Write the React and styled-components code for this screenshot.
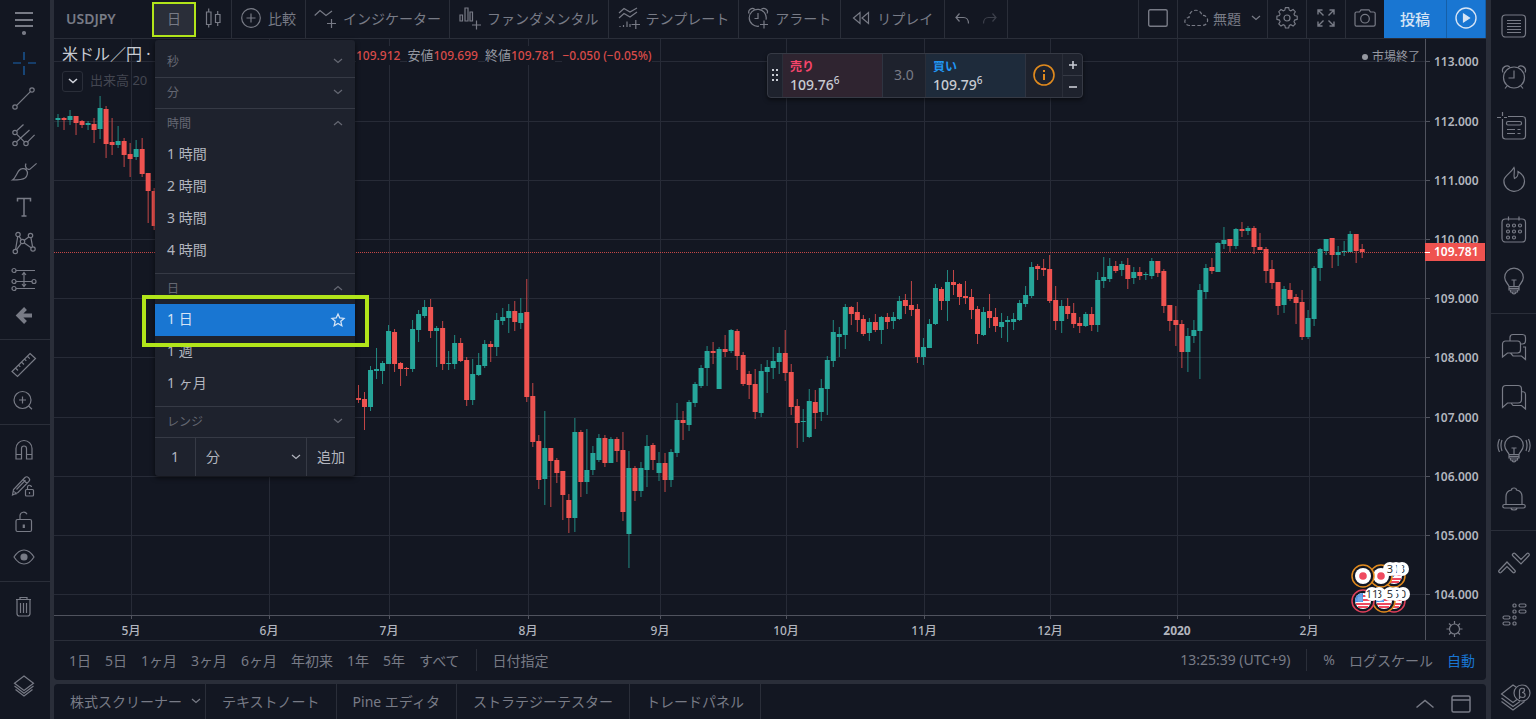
import React from 'react';
import styled, { createGlobalStyle, css } from 'styled-components';

const GlobalStyle = createGlobalStyle`
    * {
        box-sizing: border-box;
    }

    body {
        margin: 0;
        background-color: #2a2e39;
        color: #787b86;
        font-family: "Noto Sans", "Noto Sans CJK JP", sans-serif;
        font-size: 14px;
    }

    button, input, select {
        font: inherit;
        color: inherit;
        background: none;
        border: 0;
        padding: 0;
        margin: 0;
    }
`;

/* ---------- icons ---------- */

const ICONS = {
    menu: [28, 28, <><path d="M5 7h18M5 14h18M5 20h18" strokeWidth="2" /><circle cx="14" cy="27" r="1.5" fill="currentColor" /></>],
    cross: [28, 28, <path d="M3 14h8M18 14h8M14 3v8M14 17v9" />],
    line: [28, 28, <><circle cx="5" cy="22" r="2.2" /><circle cx="22" cy="5" r="2.2" /><path d="M6.7 20.4L20.4 6.7" /></>],
    fork: [28, 28, <><circle cx="5" cy="11.5" r="2.2" /><circle cx="5" cy="22.5" r="2.2" /><circle cx="16" cy="22.5" r="2.2" /><path d="M6.7 9.8l6.8-6.3M6.6 20.8L19.5 9M17.6 20.9l7-7M6.6 13.1l7.8 7.8" /></>],
    brush: [28, 28, <path d="M2.500 23c3-2 4-6.500 6.500-9.500 2-2.300 5.500-2.300 7.300-.5 2 2.200 1.200 6-1.300 8-2.500 1.800-6 2-12.500 2zM16 6.500c-.8 1.500-.6 3.500.6 4.800 1.200 1.200 3 1.400 4 .3l6-5.200M15.500 12.500l1.500-1.500" />],
    text: [28, 28, <path d="M7.500 8.500v-3h13v3M14 5.500v17.500M11.500 23h5" strokeWidth="1.500" />],
    pattern: [28, 28, <><circle cx="8" cy="5.500" r="2.200" /><circle cx="20.500" cy="6.500" r="2.200" /><circle cx="12.500" cy="12.500" r="2.200" /><circle cx="5.300" cy="22.500" r="2.200" /><circle cx="23" cy="20" r="2.200" /><path d="M5.600 20.300L7.700 7.700M9.200 7.400l2.100 3.200M14.300 11.200L18.700 7.900M20.900 8.700l1.700 9.100M6.600 20.700l4.700-6.400M14.300 13.900l6.800 4.900" /></>],
    forecast: [28, 28, <><circle cx="4" cy="5.500" r="2" /><circle cx="4" cy="16.500" r="2" /><circle cx="24" cy="16.500" r="2" /><circle cx="4" cy="23.500" r="2" /><path d="M6 5.500h19M6 16.500h16M6 23.500h19M14 8v13M12 10l2-2.500 2 2.500M12 19l2 2.500 2-2.500" /></>],
    back: [28, 28, <path d="M15.500 7.500L8.500 14.500l7 7M9 14.500h13" strokeWidth="4" />],
    ruler: [28, 28, <path d="M20 3.500l5.500 5-18 18L2 21.500zM5.500 18l2.500 2.500M8.500 15l1.800 1.800M11.500 12l2.500 2.500M14.500 9l1.800 1.800M17.300 6.200l2.500 2.500" />],
    zoom: [28, 28, <><circle cx="12.500" cy="14" r="8.500" /><path d="M9 14h7M12.500 10.500v7M18.600 20l3.400 3.300" /></>],
    magnet: [28, 28, <path d="M6 24V13.500a8 8 0 0 1 16 0V24h-5.500V13.500a2.500 2.500 0 0 0-5 0V24zM6 19.500h5.500M16.500 19.500H22" />],
    pencilLock: [28, 28, <><path d="M2.500 24l1-5.500L15 6.500c1-1 2.500-1 3.300 0l.6.600c.9.900.9 2.300 0 3.200L8 21.500zM13 8.500l4 4M6.500 18.500l9-9.300M3 20.500c1.500 0 3 1.500 3 3" /><rect x="15.500" y="18.500" width="8" height="6.500" rx="1" fill="#131722" /><path d="M17.500 18.500v-2a2 2 0 0 1 4-.5M19.500 21v2" /></>],
    lock: [28, 28, <><rect x="6" y="12.500" width="15.500" height="12" rx="1.500" /><path d="M10 12.500V8.500a3.700 3.700 0 0 1 7-1.200" /><path d="M13.800 17.500v3.500" strokeWidth="2.200" /></>],
    eye: [28, 28, <><path d="M4 14c3-4.700 6.500-7 10-7s7 2.300 10 7c-3 4.700-6.500 7-10 7s-7-2.300-10-7z" /><circle cx="14" cy="14" r="3" fill="currentColor" /></>],
    trash: [28, 28, <path d="M6 7.500h15M10 7V5.500h7V7M7 8v13.500a2.500 2.500 0 0 0 2.500 2.500h8a2.500 2.500 0 0 0 2.500-2.500V8M10.500 11v10M13.500 11v10M16.500 11v10" />],
    layers: [28, 28, <path d="M14 4l9.500 7.200L14 18.500l-9.500-7.300zM4.500 14l9.500 7.300 9.500-7.300M5.500 17.500L14 24l8.500-6.500" />],

    candles: [17, 22, <path d="M1.500 5H6v12.500H1.500zM3.700 1.500V5M3.700 17.500v3M10.500 7.500H15v8h-4.500zM12.700 4v3.500M12.700 15.500v3.500" />],
    compare: [20, 20, <><circle cx="10" cy="10" r="9.300" /><path d="M5.500 10h9M10 5.500v9" /></>],
    indicators: [22, 22, <path d="M.7 8.500L6 3.500l6 5 6-4.500M13 16.500h9M17.500 12v9" />],
    bars: [22, 22, <path d="M1 8h2.500v6H1zM6 1h3v13H6zM11 5h2.500v9H11zM13 18h9M17.500 13.500v9" />],
    template: [22, 22, <path d="M1 6l5-4.500 6 3.500 7-4M1 11l5-4.500 6 3.500 7-5M2 19v1M5.500 18v2M9 14.500V20M12 17v3M13.500 17.500H22M17.800 13v9" />],
    alert: [20, 22, <path d="M11 19.200a8.500 8.500 0 1 1 7-6.500M10 6v5.500H6.500M1 6.500C-.5 3 4 0 6.500 2M13.500 2c3-2 7.500 1 5.500 4.500M12 17.500h8M16 13.500v8" />],
    replay: [18, 14, <path d="M8 1.500v11L1.500 7zM16.500 1.500v11L10 7z" />],
    undo: [16, 14, <path d="M5.500 1.500L2 5.500l3.500 4M2 5.500h7.500c3 0 5 2.500 5 6" />],
    redo: [16, 14, <path d="M10.500 1.500L14 5.500l-3.500 4M14 5.500H6.500c-3 0-5 2.500-5 6" />],
    square: [20, 18, <rect x=".7" y=".7" width="18.500" height="16.500" rx="1.500" strokeWidth="1.400" />],
    cloud: [25, 18, <path d="M6 16.500C-1 16.500-.5 8.500 5 8.500 5 0 16.500-1.500 18 6.500c7-1 8 10 0 10z" strokeDasharray="3.500 2.200" />],
    gear: [22, 22, <><circle cx="11" cy="11" r="3" /><path d="M9.300 1.300h3.400l.7 2.700 1.600.7 2.400-1.400 2.300 2.300-1.400 2.400.7 1.600 2.700.7v3.400l-2.700.7-.7 1.600 1.400 2.400-2.300 2.300-2.400-1.400-1.600.7-.7 2.700H9.300l-.7-2.700-1.600-.7-2.400 1.400-2.300-2.300L3.700 16 3 14.400l-2.700-.7v-3.400L3 9.600 3.700 8 2.300 5.600l2.300-2.300L7 4.700 8.600 4z" transform="translate(.6 -.6) scale(.95)" /></>],
    fullscreen: [18, 18, <path d="M1 5.500V1h4.500M1.500 1.500l5 5M12.500 1H17v4.500M16.500 1.500l-5 5M1 12.500V17h4.500M1.500 16.500l5-5M12.500 17H17v-4.500M16.500 16.500l-5-5" strokeWidth="1.400" />],
    camera: [22, 18, <><path d="M1 4.500c0-1 .7-1.500 1.500-1.500H5.500L7 .8h8L16.500 3h3c1 0 1.700.6 1.700 1.500V15.500c0 1-.7 1.700-1.700 1.700h-17c-1 0-1.500-.7-1.500-1.700z" /><circle cx="11" cy="9.700" r="4.300" /></>],
    play: [22, 22, <><circle cx="11" cy="11" r="10" strokeWidth="1.400" /><path d="M8.500 7l6 4-6 4z" fill="currentColor" /></>],
    down: [10, 6, <path d="M1 1l4 3.500L9 1" />],
    up: [10, 6, <path d="M1 5l4-3.500L9 5" />],
    fold: [10, 6, <path d="M1 1l4 3.500L9 1" strokeWidth="1.600" />],
    upWide: [20, 10, <path d="M1.500 8.500L10 1.500l8.500 7" strokeWidth="1.500" />],
    windowed: [20, 18, <path d="M1 2.500C1 1.500 1.500 1 2.500 1h15c1 0 1.500.5 1.500 1.500v13c0 1-.5 1.500-1.500 1.500h-15c-1 0-1.500-.5-1.500-1.500zM1 5h18" strokeWidth="1.500" />],
    star: [14, 14, <path d="M7 1l1.800 4 4.200.4-3.200 2.900 1 4.400L7 10.500l-3.800 2.200 1-4.400L1 5.400 5.200 5z" strokeWidth="1.300" />],
    grip: [8, 14, <path d="M1 1h2v2H1zM5 1h2v2H5zM1 6h2v2H1zM5 6h2v2H5zM1 11h2v2H1zM5 11h2v2H5z" fill="currentColor" stroke="none" />],
    info: [22, 22, <><circle cx="11" cy="11" r="10" strokeWidth="1.600" /><path d="M11 10v6" strokeWidth="2" /><path d="M11 6v2" strokeWidth="2" /></>],
    plus: [10, 10, <path d="M1 5h8M5 1v8" strokeWidth="1.600" />],
    minus: [10, 10, <path d="M1 5h8" strokeWidth="1.600" />],

    list: [32, 32, <><rect x="4" y="5" width="23.500" height="22" rx="3.500" /><path d="M9 10.500h14M9 13.500h14M9 16.500h14M9 19.500h14M9 22.500h14" /></>],
    alarm: [32, 32, <><circle cx="16" cy="16.500" r="10.500" /><path d="M16 9.500V17h-5.500M5 11.500c-2.500-5 4.500-9 7-5M20 6.500c2.500-4 9.500 0 7 5M9 25l-2 2.500M23 25l2 2.500" /></>],
    news: [32, 32, <><path d="M10 4.500h14.500a3 3 0 0 1 3 3V24a3 3 0 0 1-3 3h-17a3 3 0 0 1-3-3V10M-1 5.500h4M6 5.500h3M4.500 0v4M4.500 7v3" /><rect x="8.500" y="9.500" width="15" height="3.500" rx="1.500" /><path d="M9 17.500h8M19.500 17.500h3M9 21.500h8M19.500 21.500h3" /></>],
    fire: [32, 32, <path d="M16 4.500c1.500 3-1 6 .5 11 2-.5 4-3 3.500-7 4.500 2.500 6.500 6 6.500 10a10.300 10.300 0 1 1-20.600-1c0-4.500 7-7.500 10.100-13z" />],
    calendar: [32, 32, <><rect x="4" y="5" width="23.500" height="23" rx="3.500" /><path d="M10.500 2.500v4M21 2.500v4" /><circle cx="10" cy="11.500" r="1.500" /><circle cx="16" cy="11.500" r="1.500" /><circle cx="22" cy="11.500" r="1.500" /><circle cx="10" cy="17.500" r="1.500" /><circle cx="16" cy="17.500" r="1.500" /><circle cx="22" cy="17.500" r="1.500" /><circle cx="10" cy="23.500" r="1.500" /><circle cx="16" cy="23.500" r="1.500" /></>],
    bulb: [32, 32, <path d="M11 21.500c0-2-4.300-4-4.300-9a9.300 9.300 0 0 1 18.600 0c0 5-4.300 7-4.300 9zM11 21.500V25h10v-3.500M11 23.300h10M12.500 25v2h7v-2M14 27c0 2.500 4 2.500 4 0M13.500 15h5M16 15v6" />],
    bulbLive: [32, 32, <path d="M11 21.500c0-2-4.300-4-4.300-9a9.300 9.300 0 0 1 18.600 0c0 5-4.300 7-4.300 9zM11 21.500V25h10v-3.500M11 23.300h10M12.500 25v2h7v-2M14 27c0 2.500 4 2.500 4 0M13.500 15h5M16 15v6M4 7c-1.500 4-1.500 7 0 11M1.500 6C-.5 10-.5 15 1.500 19M28 7c1.500 4 1.500 7 0 11M30.500 6c2 4 2 9 0 13" />],
    chats: [32, 32, <path d="M4.500 26V13a3 3 0 0 1 3-3h12a3 3 0 0 1 3 3v6a3 3 0 0 1-3 3h-10zM12 10V6.500a3 3 0 0 1 3-3h9.500a3 3 0 0 1 3 3V10a3 3 0 0 1-3 3h-2M25 16h2.500v12.500L23.500 25H15l-2.500-3" />],
    chat: [32, 32, <path d="M4.500 25.500V7A3.500 3.500 0 0 1 8 3.500h12A3.500 3.500 0 0 1 23.500 7v10.500A3.500 3.500 0 0 1 20 21H9.500zM23.500 9.500c2.500 0 4 1 4 3V27l-4-3.500H15L13 21" />],
    bell: [32, 32, <path d="M8 20.500v-8c0-4 2.500-6 5.500-6.500 0-1.200 1-2 2.500-2s2.500.8 2.500 2C21.500 6.500 24 8.500 24 12.500v8M6.500 20.500h19a1.700 1.700 0 0 1 0 3.500h-19a1.700 1.700 0 0 1 0-3.500zM13 24.500c.5 2 5.500 2 6 0" />],
    zigzag: [34, 32, <path d="M2 22.500L10 14l8 8.500c1 1-1 3-2 2L10 18.500 4 24.500c-1.200 1-3-1-2-2zM15.500 7.500L24 16l8-8.500c1-1.200-.8-3-2-2L24 11.500l-6-6c-1.200-1-3.200.8-2.500 2z" />],
    depth: [32, 32, <><rect x="15" y="5" width="3" height="3" rx="1" /><rect x="21" y="5" width="7" height="3" rx="1.500" /><rect x="15" y="11" width="3" height="3" rx="1" /><rect x="21" y="11" width="7" height="3" rx="1.500" /><rect x="5" y="17" width="7" height="3" rx="1.500" /><rect x="15" y="17" width="3" height="3" rx="1" /><rect x="5" y="23" width="7" height="3" rx="1.500" /><rect x="15" y="23" width="3" height="3" rx="1" /></>],
    layersBeta: [32, 32, <><path d="M18 6l-3-2L3.500 13 15 21.500l4-3M3.500 17L15 25.500l7-5M3.500 20.500L15 29l11.500-8.500" /><circle cx="24" cy="12" r="8" /><path d="M21.500 18V10c0-3.500 5-3.500 5-1 0 1.500-1 2.500-2.500 2.500 4 0 4 5 1 5-1.500 0-2.500-.5-3.500-1" /></>],
};

const IconSvg = styled.svg`
    display: block;
    flex: none;
    overflow: visible;
    fill: none;
    stroke: currentColor;
`;

const Icon = ({ name }) => {
    const [width, height, art] = ICONS[name];
    return (
        <IconSvg width={width} height={height} viewBox={`0 0 ${width} ${height}`} strokeWidth="1.2" aria-hidden="true">
            {art}
        </IconSvg>
    );
};

/* ---------- frame ---------- */

const Page = styled.div`
    display: flex;
    height: 100vh;
    overflow: hidden;
`;

const SideBar = styled.nav`
    flex: none;
    display: flex;
    flex-direction: column;
    width: ${({ $width }) => $width}px;
    background-color: #131722;
`;

const SideGroup = styled.div`
    display: flex;
    flex-direction: column;
    padding: ${({ $pad }) => $pad};
    border-bottom: 1px solid ${({ $last }) => ($last ? 'transparent' : '#2a2e39')};
`;

const SideFooter = styled.div`
    margin-top: auto;
    padding-bottom: ${({ $bottom }) => $bottom}px;
`;

const SideButton = styled.button`
    display: flex;
    align-items: center;
    justify-content: center;
    width: 100%;
    height: ${({ $height }) => $height}px;
    padding-right: ${({ $shift }) => $shift || 0}px;
    color: ${({ $active }) => ($active ? '#1b64b0' : '#787b86')};
`;

const Main = styled.main`
    flex: 1;
    min-width: 0;
    display: flex;
    flex-direction: column;
    gap: 4px;
    margin: 0 5px 0 4px;
`;

const ChartPanel = styled.section`
    flex: 1;
    min-height: 0;
    display: flex;
    flex-direction: column;
    background-color: #131722;
    border-radius: 0 0 4px 4px;
`;

/* ---------- header ---------- */

const Header = styled.header`
    flex: none;
    display: flex;
    height: 39px;
    border-bottom: 1px solid #2a2e39;
    white-space: nowrap;
`;

const HeaderButton = styled.button`
    display: flex;
    align-items: center;
    justify-content: center;
    gap: ${({ $gap }) => $gap || 7}px;
    padding: 0 ${({ $pad }) => $pad || 9}px 2px;
    ${({ $divided }) => $divided && css`
        border-right: 1px solid #2a2e39;
    `}
`;

const HistoryGroup = styled.div`
    display: flex;
    align-items: center;
    gap: 12px;
    padding: 0 9px;
    border-right: 1px solid #2a2e39;
`;

const HistoryButton = styled.button`
    opacity: ${({ disabled }) => (disabled ? 0.4 : 1)};
`;

const SymbolButton = styled.button`
    width: 98px;
    padding: 0 12px 2px;
    text-align: left;
    font-weight: 600;
`;

const IntervalAnchor = styled.div`
    position: relative;
    display: flex;
    width: 44px;
`;

const IntervalButton = styled.button`
    flex: 1;
    margin: 2px 0 1px;
    padding-bottom: 4px;
    border: 2px solid #b2e51a;
    background-color: #2a2e39;
`;

const HeaderRight = styled.div`
    display: flex;
    margin-left: auto;
    border-left: 1px solid #2a2e39;
`;

const Chevron = styled.span`
    padding-left: 6px;
`;

const PublishButton = styled.button`
    display: flex;
    align-items: center;
    justify-content: center;
    width: ${({ $width }) => $width}px;
    padding-bottom: 2px;
    background-color: #1976d2;
    color: #d6e4f5;
    font-size: 15px;
    font-weight: 500;
    border-right: 1px solid #155fa8;
`;

/* ---------- interval menu ---------- */

const Menu = styled.div`
    position: absolute;
    z-index: 5;
    top: 40px;
    left: 3px;
    width: 200px;
    padding-top: 7px;
    background-color: #1e222d;
    border-radius: 3px;
    box-shadow: 0 2px 5px rgba(0, 0, 0, 0.6);
    color: #b2b5be;
`;

const MenuSection = styled.div`
    padding-bottom: ${({ $open }) => ($open ? 6 : 0)}px;
    border-bottom: 1px solid #363a45;
`;

const MenuHeading = styled.button`
    display: flex;
    align-items: center;
    justify-content: space-between;
    width: 100%;
    height: 30px;
    padding: 0 12px 2px;
    font-size: 12px;
    color: #656873;
`;

const MenuItem = styled.button`
    position: relative;
    display: flex;
    align-items: center;
    justify-content: space-between;
    width: 100%;
    height: 32px;
    padding: 0 10px 4px 12px;
    ${({ $selected }) => $selected && css`
        z-index: 1;
        background-color: #1976d2;
        color: #d6e4f5;

        &::after {
            content: '';
            position: absolute;
            inset: -9px -14px -11px -13px;
            border: 4px solid #b2e51a;
        }
    `}
`;

const ItemIcon = styled.span`
    padding-top: 3px;
`;

const CustomRow = styled.form`
    display: flex;
    height: 38px;
`;

const CustomInput = styled.input`
    width: 41px;
    padding-bottom: 2px;
    border-right: 1px solid #363a45;
    text-align: center;
`;

const CustomUnit = styled.label`
    flex: 1;
    display: flex;
    align-items: center;
    padding-right: 5px;
    border-right: 1px solid #363a45;
`;

const CustomSelect = styled.select`
    flex: 1;
    height: 100%;
    padding: 0 0 2px 10px;
    appearance: none;
`;

const AddButton = styled.button`
    width: 48px;
    padding-bottom: 2px;
`;

const MENU = [
    { title: '秒', items: [] },
    { title: '分', items: [] },
    { title: '時間', items: ['1 時間', '2 時間', '3 時間', '4 時間'] },
    { title: '日', items: ['1 日', '1 週', '1 ヶ月'] },
    { title: 'レンジ', items: [] },
];

const IntervalMenu = () => (
    <Menu>
        {MENU.map(({ title, items }) => (
            <MenuSection key={title} $open={items.length > 0}>
                <MenuHeading>
                    {title}
                    <Icon name={items.length ? 'up' : 'down'} />
                </MenuHeading>
                {items.map((item) => (
                    <MenuItem key={item} $selected={item === '1 日'}>
                        {item}
                        {item === '1 日' && <ItemIcon><Icon name="star" /></ItemIcon>}
                    </MenuItem>
                ))}
            </MenuSection>
        ))}
        <CustomRow>
            <CustomInput defaultValue="1" aria-label="間隔" />
            <CustomUnit>
                <CustomSelect aria-label="単位">
                    <option>分</option>
                </CustomSelect>
                <Icon name="down" />
            </CustomUnit>
            <AddButton type="button">追加</AddButton>
        </CustomRow>
    </Menu>
);

const TopBar = () => (
    <Header>
        <SymbolButton>USDJPY</SymbolButton>
        <IntervalAnchor>
            <IntervalButton>日</IntervalButton>
            <IntervalMenu />
        </IntervalAnchor>
        <HeaderButton $divided aria-label="チャートタイプ"><Icon name="candles" /></HeaderButton>
        <HeaderButton $divided><Icon name="compare" />比較</HeaderButton>
        <HeaderButton $divided $pad={8}><Icon name="indicators" />インジケーター</HeaderButton>
        <HeaderButton $divided $gap={6}><Icon name="bars" />ファンダメンタル</HeaderButton>
        <HeaderButton $divided $gap={6}><Icon name="template" />テンプレート</HeaderButton>
        <HeaderButton $divided><Icon name="alert" />アラート</HeaderButton>
        <HeaderButton $divided $pad={11}><Icon name="replay" />リプレイ</HeaderButton>
        <HistoryGroup>
            <HistoryButton aria-label="元に戻す"><Icon name="undo" /></HistoryButton>
            <HistoryButton disabled aria-label="やり直し"><Icon name="redo" /></HistoryButton>
        </HistoryGroup>
        <HeaderRight>
            <HeaderButton $divided aria-label="レイアウト"><Icon name="square" /></HeaderButton>
            <HeaderButton $divided $pad={6} $gap={4}>
                <Icon name="cloud" />無題
                <Chevron><Icon name="down" /></Chevron>
            </HeaderButton>
            <HeaderButton $divided $pad={8} aria-label="設定"><Icon name="gear" /></HeaderButton>
            <HeaderButton $divided $pad={10} aria-label="全画面"><Icon name="fullscreen" /></HeaderButton>
            <HeaderButton $pad={8} aria-label="スナップショット"><Icon name="camera" /></HeaderButton>
            <PublishButton $width={63}>投稿</PublishButton>
            <PublishButton $width={39} aria-label="再生"><Icon name="play" /></PublishButton>
        </HeaderRight>
    </Header>
);

/* ---------- chart ---------- */

const ChartArea = styled.div`
    position: relative;
    flex: 1;
    min-height: 0;
`;

const ChartSvg = styled.svg`
    display: block;
    width: 100%;
    height: 100%;
    font-size: 12px;
`;

// [high, body top, body bottom, low, rising]
const RUNS = [
    {
        start: 0,
        bars: [
            [114, 118, 120, 127, 1], [117, 118, 120, 130, 0], [110, 116, 120, 125, 1], [116, 116, 123, 135, 0],
            [120, 121, 125, 128, 0], [121, 123, 125, 130, 1], [118, 124, 130, 143, 0], [96, 108, 129, 139, 1],
            [106, 109, 144, 158, 0], [118, 142, 145, 155, 0], [126, 141, 145, 148, 1], [138, 141, 155, 167, 0],
            [143, 154, 159, 177, 0], [140, 149, 157, 160, 1], [138, 149, 174, 177, 0], [173, 173, 191, 223, 0],
            [188, 191, 226, 230, 0],
        ],
    },
    {
        start: 50,
        bars: [
            [385, 398, 400, 403, 0], [392, 399, 407, 430, 0], [366, 370, 407, 411, 1], [348, 369, 371, 379, 1],
            [361, 363, 371, 384, 1], [325, 331, 364, 364, 1], [329, 332, 364, 372, 0], [362, 363, 369, 386, 0],
            [367, 368, 369, 376, 0], [320, 329, 369, 372, 1], [310, 314, 330, 342, 1], [300, 307, 316, 318, 1],
            [299, 307, 331, 338, 0], [326, 328, 331, 367, 1], [321, 328, 364, 370, 0], [351, 363, 364, 370, 1],
            [335, 343, 364, 369, 1], [338, 343, 361, 362, 0], [357, 360, 400, 406, 0], [359, 374, 400, 405, 1],
            [353, 365, 375, 376, 1], [340, 344, 366, 368, 1], [341, 344, 347, 362, 0], [313, 320, 347, 356, 1],
            [308, 317, 321, 325, 1], [304, 311, 318, 333, 1], [301, 311, 322, 331, 0], [298, 313, 323, 329, 1],
            [279, 312, 397, 402, 0], [383, 396, 442, 447, 0], [435, 441, 480, 489, 0], [411, 448, 479, 505, 1],
            [448, 448, 461, 507, 0], [458, 460, 473, 483, 0], [471, 471, 495, 520, 0], [494, 500, 518, 533, 0],
            [418, 432, 518, 532, 1], [430, 432, 482, 497, 0], [429, 470, 482, 494, 1], [446, 453, 470, 475, 1],
            [434, 438, 460, 462, 1], [435, 438, 463, 467, 0], [437, 439, 463, 463, 1], [437, 439, 451, 462, 0],
            [432, 450, 512, 521, 0], [451, 468, 534, 568, 1], [466, 468, 491, 501, 0], [462, 468, 491, 497, 1],
            [435, 446, 470, 487, 1], [443, 445, 460, 470, 0], [452, 463, 473, 481, 1], [453, 463, 480, 492, 0],
            [449, 452, 480, 487, 1], [403, 420, 453, 457, 1], [411, 420, 423, 440, 0], [400, 402, 425, 431, 1],
            [382, 384, 403, 407, 1], [365, 368, 386, 388, 1], [346, 351, 368, 386, 1], [342, 351, 353, 364, 0],
            [347, 349, 389, 389, 1], [335, 349, 352, 357, 0], [329, 330, 351, 353, 1], [329, 331, 356, 370, 0],
            [352, 355, 384, 386, 0], [371, 374, 385, 399, 0], [369, 384, 412, 419, 0], [364, 371, 413, 417, 1],
            [360, 367, 372, 393, 1], [347, 361, 368, 379, 1], [347, 353, 362, 374, 1], [330, 353, 373, 381, 0],
            [364, 372, 407, 415, 0], [399, 406, 423, 448, 0], [409, 421, 422, 442, 1], [389, 401, 437, 438, 1],
            [390, 402, 413, 429, 0], [379, 388, 412, 421, 1], [356, 360, 389, 415, 1], [320, 332, 361, 367, 1],
            [327, 334, 337, 357, 1], [304, 307, 335, 349, 1], [306, 307, 314, 325, 0], [302, 312, 320, 332, 0],
            [315, 319, 334, 336, 0], [318, 322, 333, 341, 1], [314, 322, 330, 332, 0], [316, 317, 330, 344, 1],
            [313, 317, 322, 329, 0], [312, 317, 321, 329, 1], [296, 301, 319, 320, 1], [294, 300, 306, 314, 0],
            [281, 305, 310, 316, 0], [304, 309, 357, 363, 0], [338, 347, 357, 365, 1], [319, 324, 348, 348, 1],
            [284, 288, 324, 325, 1], [287, 289, 301, 310, 0], [270, 282, 301, 321, 1], [270, 282, 285, 295, 0],
            [283, 284, 297, 305, 0], [281, 296, 298, 304, 0], [289, 297, 310, 319, 0], [306, 309, 334, 344, 0],
            [307, 312, 335, 336, 1], [294, 311, 318, 328, 0], [308, 317, 326, 332, 0], [313, 322, 327, 338, 1],
            [316, 320, 322, 342, 1], [313, 319, 322, 330, 1], [300, 303, 320, 321, 1], [286, 295, 304, 307, 1],
            [262, 267, 296, 298, 1], [264, 266, 269, 280, 0], [259, 268, 270, 276, 0], [255, 269, 301, 303, 0],
            [286, 300, 321, 330, 0], [300, 306, 321, 333, 1], [298, 306, 314, 319, 0], [303, 313, 324, 328, 0],
            [317, 323, 326, 333, 0], [312, 314, 326, 327, 1], [307, 314, 325, 331, 0], [272, 280, 325, 332, 1],
            [257, 277, 281, 288, 1], [258, 266, 279, 282, 1], [261, 266, 271, 273, 0], [261, 264, 270, 276, 1],
            [258, 265, 279, 289, 0], [267, 272, 278, 284, 1], [267, 272, 276, 280, 0], [272, 274, 275, 280, 1],
            [258, 261, 276, 279, 1], [261, 261, 273, 277, 0], [269, 271, 306, 313, 0], [305, 305, 321, 331, 0],
            [306, 320, 325, 346, 0], [320, 324, 352, 368, 0], [328, 336, 352, 372, 1], [320, 330, 336, 343, 1],
            [284, 290, 331, 379, 1], [264, 268, 292, 299, 1], [258, 267, 271, 274, 0], [242, 243, 272, 272, 1],
            [227, 240, 244, 249, 1], [239, 239, 246, 252, 0], [228, 229, 246, 249, 1], [222, 229, 231, 237, 0],
            [226, 228, 231, 235, 1], [226, 228, 247, 254, 0], [233, 247, 250, 250, 0], [247, 249, 271, 283, 0],
            [260, 269, 283, 289, 0], [282, 282, 306, 315, 0], [286, 289, 305, 313, 1], [283, 290, 299, 301, 0],
            [294, 297, 303, 324, 0], [290, 302, 337, 340, 0], [310, 318, 337, 339, 1], [266, 268, 319, 326, 1],
            [248, 249, 268, 281, 1], [239, 239, 251, 255, 1], [238, 238, 255, 268, 0], [246, 252, 255, 266, 1],
            [241, 251, 252, 256, 1], [231, 234, 252, 252, 1], [234, 234, 251, 263, 0], [244, 249, 252, 258, 0],
        ],
    },
];

const PRICES = [113, 112, 111, 110, 109, 108, 107, 106, 105, 104];

const MONTHS = [
    [131, '5月'], [269, '6月'], [389, '7月'], [528, '8月'], [660, '9月'],
    [786, '10月'], [924, '11月'], [1050, '12月'], [1177, '2020'], [1309, '2月'],
];

const priceY = (price) => Math.floor(61.8 + (113 - price) * 59.2);

const Candle = ({ index, bar }) => {
    const [high, top, bottom, low, rising] = bar;
    const x = 58 + index * 6.01;
    const color = rising ? '#26a69a' : '#ef5350';
    return (
        <g fill={color}>
            <rect x={x - 0.5} y={high} width="1" height={low - high} opacity="0.8" />
            <rect x={x - 2.5} y={top} width="5" height={Math.max(bottom - top, 1)} />
        </g>
    );
};

const Flag = ({ x, y, ring, us }) => (
    <g transform={`translate(${x} ${y})`}>
        <circle r="11" fill="#131722" stroke={ring} strokeWidth="1.5" />
        <circle r="8" fill="#fff" />
        {us ? (
            <g>
                <path d="M-8 0A8 8 0 0 1 0-8V1H-8z" fill="#4a90e2" />
                <path d="M0-5H6M0-1H8M-7 3H7M-5 6H5" stroke="#ef4a5f" strokeWidth="2" />
                <path d="M-6-3H0M-7-1H0M-4-7V1M-2-8V1" stroke="#9cc4f2" strokeWidth=".6" />
            </g>
        ) : (
            <circle r="3.800" fill="#ef4a5f" />
        )}
    </g>
);

const Count = ({ x, y, children }) => (
    <g>
        <rect x={x - 7} y={y - 7} width="14" height="14" rx="7" fill="#fff" />
        <text x={x} y={y + 4} fill="#333" fontSize="11" textAnchor="middle">{children}</text>
    </g>
);

const PriceChart = () => (
    <ChartSvg viewBox="54 39 1432 602" preserveAspectRatio="xMaxYMid meet" role="img" aria-label="USDJPY 日足">
        <g stroke="#272b37" strokeWidth="1" shapeRendering="crispEdges">
            {PRICES.map((price) => <path key={price} d={`M54 ${priceY(price)}.5H1425`} />)}
            {MONTHS.map(([x]) => <path key={x} d={`M${x}.5 39V615`} />)}
        </g>
        <path d="M54 252.5H1425" stroke="#ef5350" strokeDasharray="1 1" opacity="0.8" />
        {RUNS.map(({ start, bars }) => bars.map((bar, i) => (
            <Candle key={start + i} index={start + i} bar={bar} />
        )))}
        <g stroke="#50535e" shapeRendering="crispEdges">
            <path d="M54 615.5H1486M1425.5 39V641" />
            {PRICES.map((price) => <path key={price} d={`M1425 ${priceY(price)}.5h5`} />)}
            {MONTHS.map(([x]) => <path key={x} d={`M${x}.5 615v4`} />)}
        </g>
        <path d="M54 641H1486" stroke="#2a2e39" strokeWidth="2" />
        <g fill="#b2b5be" fontWeight="600">
            {PRICES.map((price) => <text key={price} x="1434" y={priceY(price) + 5}>{`${price}.000`}</text>)}
            {MONTHS.map(([x, name]) => (
                <text key={x} x={x} y="635" textAnchor="middle" fontWeight={name === '2020' ? 700 : 500}>{name}</text>
            ))}
        </g>
        <rect x="1425" y="243" width="60" height="18" fill="#ef5350" />
        <path d="M1425 252.5h5" stroke="#fff" />
        <text x="1434" y="256" fill="#fff" fontWeight="600">109.781</text>
        <Flag x={1394} y={576} ring="#e08a1e" us />
        <Flag x={1381} y={576} ring="#e08a1e" />
        <Flag x={1363} y={576} ring="#e08a1e" />
        <Flag x={1394} y={601} ring="#e0405a" us />
        <Flag x={1384} y={601} ring="#e08a1e" us />
        <Flag x={1363} y={601} ring="#e0405a" us />
        <Count x={1402} y={569}>3</Count>
        <Count x={1396} y={569}>1</Count>
        <Count x={1390} y={569}>3</Count>
        <Count x={1379} y={594}>3</Count>
        <Count x={1372} y={594}>11</Count>
        <Count x={1403} y={594}>0</Count>
        <Count x={1396} y={594}>5</Count>
        <Count x={1390} y={594}>5</Count>
        <g transform="translate(1454.500 629)" fill="none" stroke="#787b86" strokeWidth="1.200">
            <circle r="5" />
            <path d="M0-5v-3M0 5v3M-5 0h-3M5 0h3M3.500-3.500l2-2M-3.500-3.500l-2-2M3.500 3.500l2 2M-3.500 3.500l-2 2" />
        </g>
    </ChartSvg>
);

const Legend = styled.div`
    position: absolute;
    top: 5px;
    left: 8px;
    display: flex;
    flex-direction: column;
    gap: 4px;
`;

const LegendRow = styled.div`
    display: flex;
    align-items: center;
    height: 22px;
    font-size: 13px;
    line-height: 18px;
    white-space: nowrap;
`;

const LegendTitle = styled.div`
    width: 294px;
    padding-bottom: 2px;
    font-size: 16px;
    color: #c8cbd3;
`;

const LegendValue = styled.span`
    margin-right: 7px;
    background-color: #131722;
    color: #9598a1;

    b {
        font-size: 12px;
        font-weight: 500;
        color: #d84b49;
    }
`;

const FoldButton = styled.button`
    display: flex;
    align-items: center;
    justify-content: center;
    width: 21px;
    height: 21px;
    margin-right: 7px;
    border: 1px solid #2a2e39;
    border-radius: 3px;
    color: #d1d4dc;
`;

const Study = styled.span`
    padding-bottom: 2px;
    color: #434651;
`;

const MarketStatus = styled.div`
    position: absolute;
    top: 9px;
    right: 66px;
    display: flex;
    align-items: center;
    gap: 4px;
    font-size: 12px;
    line-height: 18px;
    color: #9598a1;

    &::before {
        content: '';
        width: 6px;
        height: 6px;
        border-radius: 50%;
        background-color: #9598a1;
    }
`;

const OrderPanel = styled.div`
    position: absolute;
    top: 14px;
    right: 403px;
    display: flex;
    height: 45px;
    border: 1px solid #363a45;
    border-radius: 4px;
    background-color: #1e222d;
    box-shadow: 0 2px 4px rgba(0, 0, 0, 0.5);
    color: #c8cbd3;
`;

const OrderCell = styled.div`
    display: flex;
    align-items: center;
    justify-content: center;
    width: ${({ $width }) => $width}px;
    padding-bottom: 2px;
    border-right: 1px solid #2a2e39;
    color: ${({ $color }) => $color || 'inherit'};
`;

const QuoteButton = styled.button`
    width: ${({ $width }) => $width}px;
    padding: 0 0 0 7px;
    border-right: 1px solid #2f3441;
    background-color: ${({ $side }) => ($side === 'sell' ? '#2f2430' : '#1e2b3b')};
    text-align: left;
    line-height: 18px;
    font-weight: 500;

    strong {
        display: block;
        font-size: 12px;
        color: ${({ $side }) => ($side === 'sell' ? '#f7456b' : '#2196f3')};
    }

    sup {
        font-size: 10px;
        line-height: 0;
    }
`;

const Steppers = styled.div`
    display: flex;
    flex-direction: column;
    width: 19px;
`;

const Stepper = styled.button`
    flex: 1;
    display: flex;
    align-items: center;
    justify-content: center;

    & + & {
        border-top: 1px solid #363a45;
    }
`;

/* ---------- bottom rows ---------- */

const RangeBar = styled.div`
    flex: none;
    display: flex;
    align-items: center;
    gap: 14px;
    height: 39px;
    padding: 0 11px 2px 15px;
    white-space: nowrap;
`;

const RangeButton = styled.button`
    color: ${({ $active }) => ($active ? '#1976d2' : 'inherit')};
`;

const Separator = styled.i`
    width: 1px;
    height: 22px;
    margin: 0 2px;
    background-color: #2a2e39;
`;

const Spacer = styled.div`
    flex: 1;
`;

const TabBar = styled.footer`
    flex: none;
    display: flex;
    height: 35px;
    background-color: #131722;
    border-radius: 4px 4px 0 0;
    white-space: nowrap;
`;

const Tab = styled.button`
    display: flex;
    align-items: center;
    gap: 9px;
    padding: 0 ${({ $right }) => $right || 16}px 1px 16px;
    border-right: 1px solid #2a2e39;
`;

const TabTools = styled.div`
    display: flex;
    align-items: center;
    gap: 16px;
    margin-left: auto;
    padding: 4px 15px 0 0;
`;

const RANGES = ['1日', '5日', '1ヶ月', '3ヶ月', '6ヶ月', '年初来', '1年', '5年', 'すべて'];

const LEFT_TOOLS = [
    ['cross', 'line', 'fork', 'brush', 'text', 'pattern', 'forecast', 'back'],
    ['ruler', 'zoom'],
    ['magnet', 'pencilLock', 'lock', 'eye'],
    ['trash'],
];

const RIGHT_TOOLS = [
    ['list', 'alarm', 'news', 'fire', 'calendar', 'bulb'],
    ['chats', 'chat', 'bulbLive', 'bell'],
    ['zigzag', 'depth'],
];

const App = () => {
    return (
        <Page>
            <GlobalStyle />
            <SideBar $width={50}>
                <SideButton $height={39} $shift={2} aria-label="メニュー"><Icon name="menu" /></SideButton>
                {LEFT_TOOLS.map((tools, i) => (
                    <SideGroup key={tools[0]} $pad="6px 0" $last={i === LEFT_TOOLS.length - 1}>
                        {tools.map((tool) => (
                            <SideButton key={tool} $height={36} $shift={2} $active={tool === 'cross'} aria-label={tool}>
                                <Icon name={tool} />
                            </SideButton>
                        ))}
                    </SideGroup>
                ))}
                <SideFooter $bottom={15}>
                    <SideButton $height={36} $shift={2} aria-label="layers"><Icon name="layers" /></SideButton>
                </SideFooter>
            </SideBar>

            <Main>
                <ChartPanel>
                    <TopBar />
                    <ChartArea>
                        <PriceChart />
                        <Legend>
                            <LegendRow>
                                <LegendTitle>米ドル／円 ·</LegendTitle>
                                <LegendValue><b>109.912</b></LegendValue>
                                <LegendValue>安値<b>109.699</b></LegendValue>
                                <LegendValue>終値<b>109.781</b></LegendValue>
                                <LegendValue><b>−0.050 (−0.05%)</b></LegendValue>
                            </LegendRow>
                            <LegendRow>
                                <FoldButton aria-label="折りたたむ"><Icon name="fold" /></FoldButton>
                                <Study>出来高 20</Study>
                            </LegendRow>
                        </Legend>
                        <OrderPanel>
                            <OrderCell $width={15}><Icon name="grip" /></OrderCell>
                            <QuoteButton $width={100} $side="sell"><strong>売り</strong>109.76<sup>6</sup></QuoteButton>
                            <OrderCell $width={43} $color="#787b86">3.0</OrderCell>
                            <QuoteButton $width={100} $side="buy"><strong>買い</strong>109.79<sup>6</sup></QuoteButton>
                            <OrderCell $width={37} $color="#e08a1e"><Icon name="info" /></OrderCell>
                            <Steppers>
                                <Stepper aria-label="増やす"><Icon name="plus" /></Stepper>
                                <Stepper aria-label="減らす"><Icon name="minus" /></Stepper>
                            </Steppers>
                        </OrderPanel>
                        <MarketStatus>市場終了</MarketStatus>
                    </ChartArea>
                    <RangeBar>
                        {RANGES.map((range) => <RangeButton key={range}>{range}</RangeButton>)}
                        <Separator />
                        <RangeButton>日付指定</RangeButton>
                        <Spacer />
                        <RangeButton>13:25:39 (UTC+9)</RangeButton>
                        <Separator />
                        <RangeButton>%</RangeButton>
                        <RangeButton>ログスケール</RangeButton>
                        <RangeButton $active>自動</RangeButton>
                    </RangeBar>
                </ChartPanel>
                <TabBar>
                    <Tab $right={4}>株式スクリーナー<Icon name="down" /></Tab>
                    <Tab>テキストノート</Tab>
                    <Tab>Pine エディタ</Tab>
                    <Tab>ストラテジーテスター</Tab>
                    <Tab>トレードパネル</Tab>
                    <TabTools>
                        <button aria-label="開く"><Icon name="upWide" /></button>
                        <button aria-label="最大化"><Icon name="windowed" /></button>
                    </TabTools>
                </TabBar>
            </Main>

            <SideBar $width={45}>
                {RIGHT_TOOLS.map((tools, i) => (
                    <SideGroup key={tools[0]} $pad={i === 0 ? '0 0 7px' : '7px 0 5px'} $last={i === RIGHT_TOOLS.length - 1}>
                        {tools.map((tool) => (
                            <SideButton key={tool} $height={51} aria-label={tool}><Icon name={tool} /></SideButton>
                        ))}
                    </SideGroup>
                ))}
                <SideFooter $bottom={0}>
                    <SideButton $height={44} aria-label="layers beta"><Icon name="layersBeta" /></SideButton>
                </SideFooter>
            </SideBar>
        </Page>
    );
};

export default App;
